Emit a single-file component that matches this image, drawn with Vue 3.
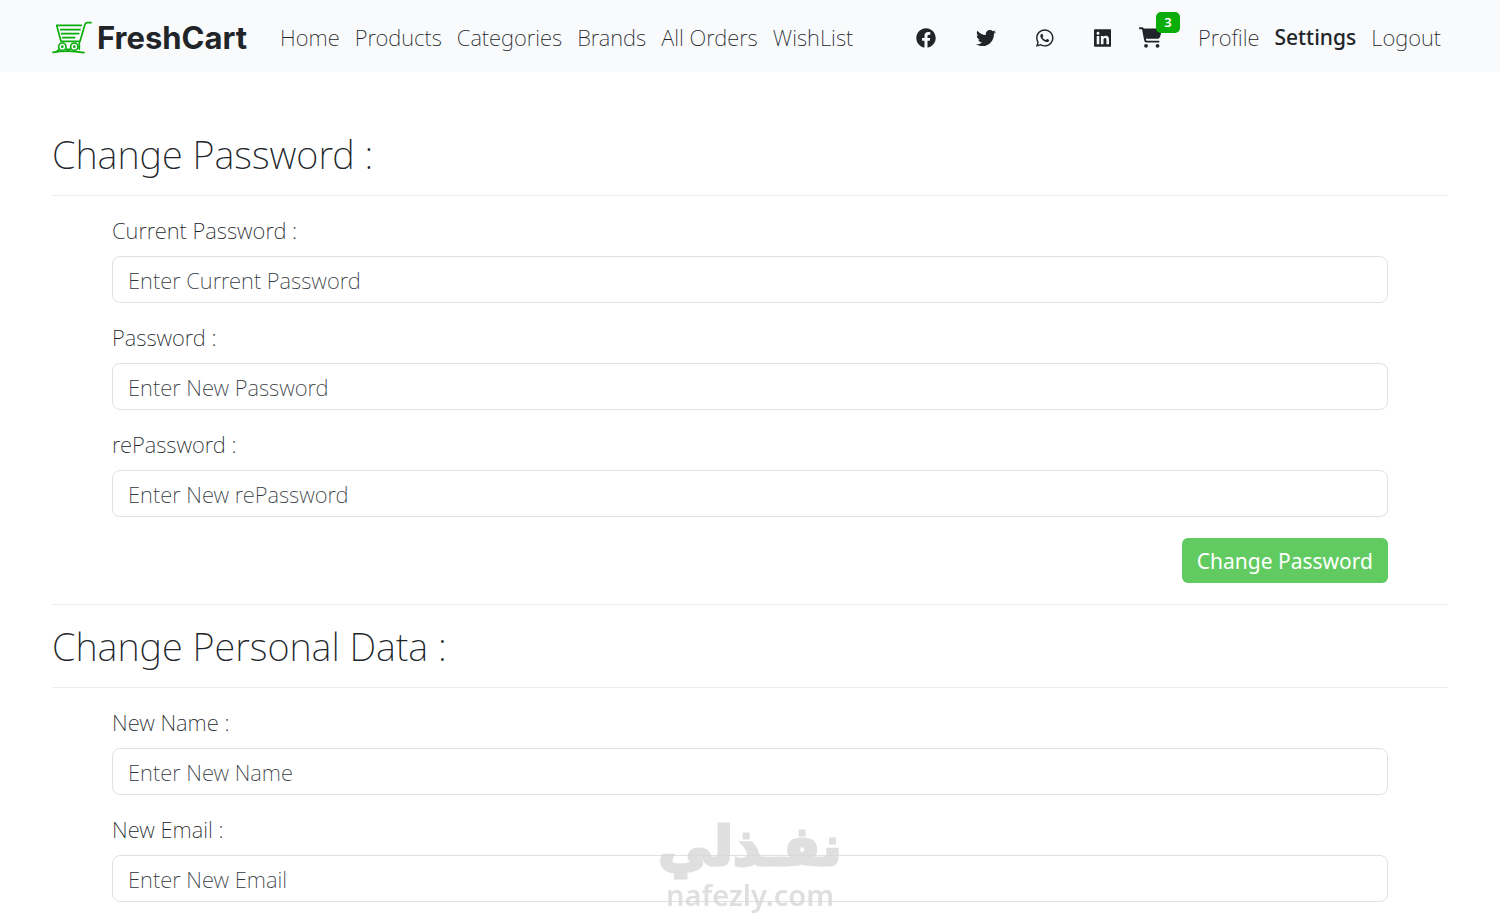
<!-- 账户设置页 -->
<template>
  <div class="page">
    <nav class="navbar">
      <a class="brand" href="#">
        <svg class="brand-icon" viewBox="0 0 120 100" aria-hidden="true">
          <path d="M117 4H106Q101 4 99 9L84 60M88 12H14L27 60M26 25H84M29 37H80M32 49H68M27 60H84" />
          <circle cx="31" cy="76" r="11" />
          <circle cx="67" cy="76" r="11" />
          <circle class="hub" cx="31" cy="76" r="4" />
          <circle class="hub" cx="67" cy="76" r="4" />
          <path d="M43 84H55M82 62V84M20 85Q17 92 3 93Q48 85 96 94" />
        </svg>
        <span>FreshCart</span>
      </a>

      <div class="nav-links">
        <a v-for="link in mainLinks" :key="link" href="#">{{ link }}</a>
      </div>

      <div class="nav-right">
        <a
          v-for="icon in socials"
          :key="icon.name"
          class="social"
          href="#"
          :aria-label="icon.name"
        >
          <svg :viewBox="icon.box"><path :d="icon.path" /></svg>
        </a>

        <a class="cart" href="#" aria-label="Cart">
          <svg viewBox="0 0 576 512">
            <path d="M0 24C0 10.7 10.7 0 24 0H69.5c22 0 41.5 12.8 50.6 32h411c26.3 0 45.5 25 38.6 50.4l-41 152.3c-8.5 31.4-37 53.3-69.5 53.3H170.7l5.4 28.5c2.2 11.3 12.1 19.5 23.6 19.5H488c13.3 0 24 10.7 24 24s-10.7 24-24 24H199.7c-34.6 0-64.3-24.6-70.7-58.5L77.4 54.5c-.7-3.8-4-6.5-7.9-6.5H24C10.7 48 0 37.3 0 24zM128 464a48 48 0 1 1 96 0 48 48 0 1 1-96 0zm336-48a48 48 0 1 1 0 96 48 48 0 1 1 0-96z" />
          </svg>
          <span class="badge">{{ cartCount }}</span>
        </a>

        <div class="nav-links">
          <a href="#">Profile</a>
          <a class="active" href="#">Settings</a>
          <a href="#">Logout</a>
        </div>
      </div>
    </nav>

    <main class="content">
      <h2>Change Password :</h2>
      <hr />
      <form class="form" @submit.prevent>
        <div v-for="field in passwordFields" :key="field.id" class="field">
          <label :for="field.id">{{ field.label }}</label>
          <input
            :id="field.id"
            v-model="form[field.id]"
            type="password"
            :placeholder="field.placeholder"
          />
        </div>
        <div class="actions">
          <button type="submit">Change Password</button>
        </div>
      </form>

      <hr class="divider" />

      <h2>Change Personal Data :</h2>
      <hr />
      <form class="form" @submit.prevent>
        <div v-for="field in personalFields" :key="field.id" class="field">
          <label :for="field.id">{{ field.label }}</label>
          <input
            :id="field.id"
            v-model="form[field.id]"
            :type="field.type"
            :placeholder="field.placeholder"
          />
        </div>
      </form>
    </main>

    <div class="watermark">
      <span class="watermark-ar" lang="ar" dir="rtl">نفـذلي</span>
      <span class="watermark-en">nafezly.com</span>
    </div>
  </div>
</template>

<script setup>
import { reactive, ref } from "vue";

const cartCount = ref(3);

const form = reactive({
  currentPassword: "",
  password: "",
  rePassword: "",
  name: "",
  email: ""
});

const mainLinks = ["Home", "Products", "Categories", "Brands", "All Orders", "WishList"];

const passwordFields = [
  { id: "currentPassword", label: "Current Password :", placeholder: "Enter Current Password" },
  { id: "password", label: "Password :", placeholder: "Enter New Password" },
  { id: "rePassword", label: "rePassword :", placeholder: "Enter New rePassword" }
];

const personalFields = [
  { id: "name", type: "text", label: "New Name :", placeholder: "Enter New Name" },
  { id: "email", type: "email", label: "New Email :", placeholder: "Enter New Email" }
];

const socials = [
  {
    name: "Facebook",
    box: "0 0 512 512",
    path: "M504 256C504 119 393 8 256 8S8 119 8 256c0 123.78 90.69 226.38 209.25 245V327.69h-63V256h63v-54.64c0-62.15 37-96.48 93.67-96.48 27.14 0 55.52 4.84 55.52 4.84v61h-31.28c-30.8 0-40.41 19.12-40.41 38.73V256h68.78l-11 71.69h-57.78V501C413.31 482.38 504 379.78 504 256z"
  },
  {
    name: "Twitter",
    box: "0 0 512 512",
    path: "M459.37 151.716c.325 4.548.325 9.097.325 13.645 0 138.72-105.583 298.558-298.558 298.558-59.452 0-114.68-17.219-161.137-47.106 8.447.974 16.568 1.299 25.34 1.299 49.055 0 94.213-16.568 130.274-44.832-46.132-.975-84.792-31.188-98.112-72.772 6.498.974 12.995 1.624 19.818 1.624 9.421 0 18.843-1.3 27.614-3.573-48.081-9.747-84.143-51.98-84.143-102.985v-1.299c13.969 7.797 30.214 12.67 47.431 13.319-28.264-18.843-46.781-51.005-46.781-87.391 0-19.492 5.197-37.36 14.294-52.954 51.655 63.675 129.3 105.258 216.365 109.807-1.624-7.797-2.599-15.918-2.599-24.04 0-57.828 46.782-104.934 104.934-104.934 30.213 0 57.502 12.67 76.67 33.137 23.715-4.548 46.456-13.32 66.599-25.34-7.798 24.366-24.366 44.833-46.132 57.827 21.117-2.273 41.584-8.122 60.426-16.243-14.292 20.791-32.161 39.308-52.628 54.253z"
  },
  {
    name: "WhatsApp",
    box: "0 0 448 512",
    path: "M380.9 97.1C339 55.1 283.2 32 223.9 32c-122.4 0-222 99.6-222 222 0 39.1 10.2 77.3 29.6 111L0 480l117.7-30.9c32.4 17.7 68.9 27 106.1 27h.1c122.3 0 224.1-99.6 224.1-222 0-59.3-25.2-115-67.1-157zm-157 341.6c-33.2 0-65.7-8.9-94-25.7l-6.7-4-69.8 18.3L72 359.2l-4.4-7c-18.5-29.4-28.2-63.3-28.2-98.2 0-101.7 82.8-184.5 184.6-184.5 49.3 0 95.6 19.2 130.4 54.1 34.8 34.9 56.2 81.2 56.1 130.5 0 101.8-84.9 184.6-186.6 184.6zm101.2-138.2c-5.5-2.8-32.8-16.2-37.9-18-5.1-1.9-8.8-2.8-12.5 2.8-3.7 5.6-14.3 18-17.6 21.8-3.2 3.7-6.5 4.2-12 1.4-32.6-16.3-54-29.1-75.5-66-5.7-9.8 5.7-9.1 16.3-30.3 1.8-3.7.9-6.9-.5-9.7-1.4-2.8-12.5-30.1-17.1-41.2-4.5-10.8-9.1-9.3-12.5-9.5-3.2-.2-6.9-.2-10.6-.2-3.7 0-9.7 1.4-14.8 6.9-5.1 5.6-19.4 19-19.4 46.3 0 27.3 19.9 53.7 22.6 57.4 2.8 3.7 39.1 59.7 94.8 83.8 35.2 15.2 49 16.5 66.6 13.9 10.7-1.6 32.8-13.4 37.4-26.4 4.6-13 4.6-24.1 3.2-26.4-1.3-2.5-5-3.9-10.5-6.6z"
  },
  {
    name: "LinkedIn",
    box: "0 0 448 512",
    path: "M416 32H31.9C14.3 32 0 46.5 0 64.3v383.4C0 465.5 14.3 480 31.9 480H416c17.6 0 32-14.5 32-32.3V64.3c0-17.8-14.4-32.3-32-32.3zM135.4 416H69V202.2h66.5V416zm-33.2-243c-21.3 0-38.5-17.3-38.5-38.5S80.9 96 102.2 96c21.2 0 38.5 17.3 38.5 38.5 0 21.3-17.2 38.5-38.5 38.5zm282.1 243h-66.4V312c0-24.8-.5-56.7-34.5-56.7-34.6 0-39.9 27-39.9 54.9V416h-66.4V202.2h63.7v29.2h.9c8.9-16.8 30.6-34.5 62.9-34.5 67.2 0 79.7 44.3 79.7 101.9V416z"
  }
];
</script>

<style>
body {
  margin: 0;
  background: #fff;
}
</style>

<style scoped>
.page {
  color: #212529;
  font-family: "Noto Sans", "Open Sans", sans-serif;
  font-size: 22px;
  font-weight: 200;
}

a {
  color: inherit;
  text-decoration: none;
}

/* 导航栏 */
.navbar {
  display: flex;
  align-items: center;
  box-sizing: border-box;
  height: 72px;
  padding: 3px 52px 0;
  background: #f8fafc;
}

.brand {
  display: flex;
  align-items: center;
  gap: 5px;
  margin-right: 25px;
  font-family: Inter, sans-serif;
  font-size: 31px;
  font-weight: 700;
}

.brand-icon {
  width: 40px;
  height: 34px;
  fill: none;
  stroke: #0aad0a;
  stroke-width: 5;
  stroke-linecap: round;
  stroke-linejoin: round;
}

.brand-icon .hub {
  fill: #0aad0a;
  stroke: none;
}

.nav-links {
  display: flex;
  line-height: 32px;
  white-space: nowrap;
}

.nav-links a {
  padding: 3px 7px 5px 8px;
}

.nav-links .active {
  font-size: 21px;
  font-weight: 500;
}

.nav-right {
  display: flex;
  align-items: center;
  margin-left: auto;
}

.social {
  display: flex;
  padding: 0 20px;
}

.social svg {
  height: 20px;
  fill: #212529;
}

.cart {
  position: relative;
  display: flex;
  padding: 0 28px 0 8px;
}

.cart svg {
  width: 23px;
  height: 21px;
  fill: #212529;
}

.badge {
  position: absolute;
  top: -15px;
  left: 25px;
  width: 24px;
  border-radius: 5px;
  background: #0aad0a;
  color: #fff;
  font-size: 13px;
  font-weight: 600;
  line-height: 21px;
  text-align: center;
}

/* 表单 */
.content {
  padding: 59px 52px 10px;
}

h2 {
  margin: 0 0 18px;
  font-size: 38px;
  font-weight: 250;
  line-height: 46px;
}

hr {
  margin: 16px 0;
  border: 0;
  border-top: 1px solid #ececed;
}

.divider {
  margin: 21px 0 18px;
}

.form {
  padding: 0 60px;
}

.field + .field {
  margin-top: 16px;
}

label {
  display: block;
  margin-bottom: 8px;
  font-weight: 250;
  line-height: 36px;
}

input {
  display: block;
  box-sizing: border-box;
  width: 100%;
  height: 47px;
  padding: 0 15px;
  border: 1px solid #dee2e6;
  border-radius: 8px;
  background: #fff;
  color: #212529;
  font: inherit;
}

input::placeholder {
  color: #33383d;
  opacity: 1;
}

.actions {
  display: flex;
  justify-content: flex-end;
  margin-top: 21px;
}

button {
  height: 45px;
  padding: 0 15px;
  border: 0;
  border-radius: 6px;
  background: #61cb61;
  color: #fff;
  font: inherit;
  font-size: 21px;
  font-weight: 400;
}

/* 水印 */
.watermark {
  position: fixed;
  bottom: 0;
  left: 50%;
  display: flex;
  flex-direction: column;
  align-items: center;
  transform: translateX(-50%);
  color: #d8d8d8;
  opacity: 0.8;
  pointer-events: none;
}

.watermark-ar {
  font-family: "DejaVu Sans", sans-serif;
  font-size: 54px;
  font-weight: 700;
  line-height: 60px;
  -webkit-text-stroke: 3px #d8d8d8;
}

.watermark-en {
  font-family: "Noto Sans", sans-serif;
  font-size: 29px;
  font-weight: 600;
  line-height: 36px;
}
</style>
